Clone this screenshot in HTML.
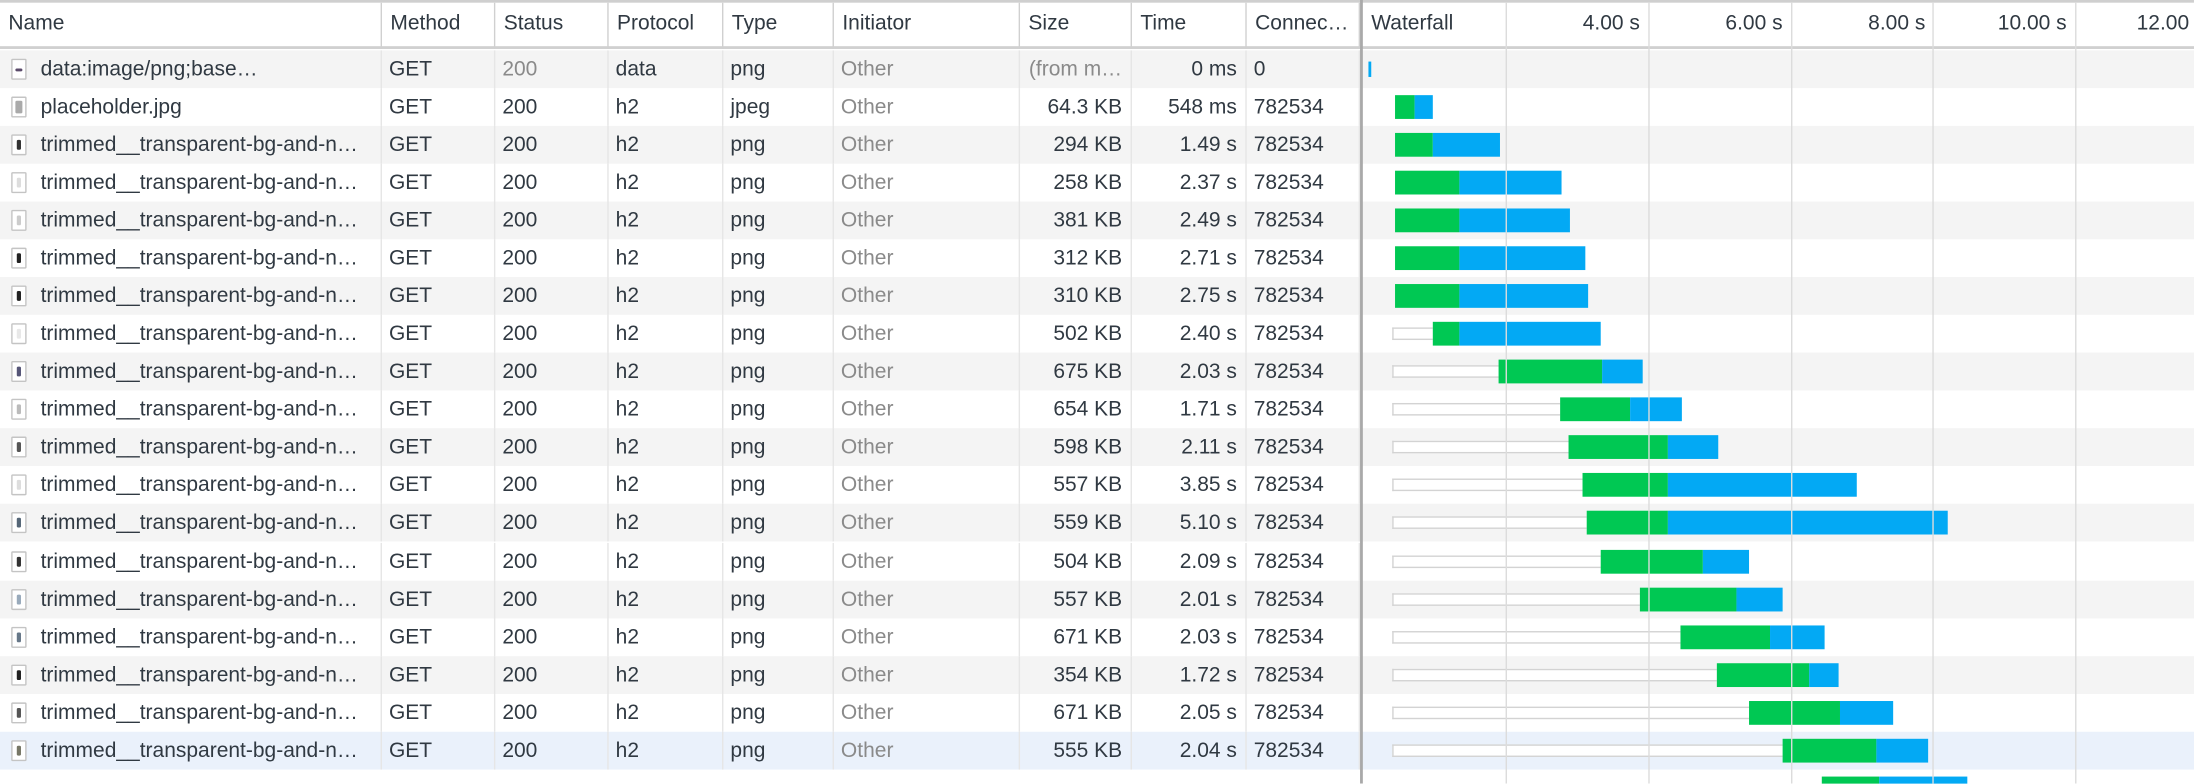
<!DOCTYPE html>
<html><head><meta charset="utf-8"><style>
*{margin:0;padding:0;box-sizing:border-box}
html,body{width:2194px;height:784px;overflow:hidden;background:#fff}
#s{position:absolute;left:0;top:0;width:1568px;height:560px;overflow:hidden;transform:scale(1.39923);transform-origin:0 0;font-family:"Liberation Sans",Arial,sans-serif;font-size:15px;color:#303942}
.top{position:absolute;left:0;top:0;width:1568px;height:2px;background:#cfcfcf}
.hdr{position:absolute;top:2px;left:0;width:1568px;height:33px;border-bottom:2px solid #d0d0d0;background:#fff}
.h{position:absolute;top:0;height:33px;line-height:30px;padding-left:6px;border-right:1px solid #d0d0d0;white-space:nowrap;overflow:hidden}
.row{position:absolute;left:0;width:1568px;height:27.07px}
.g{background:#f4f4f4}
.sel{background:#eaf1fb}
.c{position:absolute;top:0;height:27.07px;line-height:27px;padding-left:5px;white-space:nowrap;overflow:hidden;border-right:1px solid #e6e6e6}
.r{text-align:right;padding-right:6px;padding-left:0}
.gr{color:#8a8a8a}
.ic{position:absolute;left:8px;top:6px;width:11px;height:15px;border:1px solid #c4c4c4;background:#fff;border-radius:1px}
.ic i{position:absolute;left:3px;top:3px;width:3px;height:7px;border-radius:1px}
.nm{padding-left:29px}
.wf{position:absolute;left:972px;top:0;width:2px;height:560px;background:#a9a9a9;z-index:5}
.gl{position:absolute;top:2px;width:1px;height:558px;background:#dcdcdc;z-index:4}
.tl{position:absolute;top:2px;height:33px;line-height:30px;text-align:right;width:80px;z-index:6}
.b{position:absolute;height:17px;top:5px}
.gn{background:#00c853}.bl{background:#03a9f4}
.w{position:absolute;height:9px;top:9px;border:1.5px solid #d3d3d3;background:#fff;border-right:none}
</style></head><body><div id="s">
<div class="top"></div>
<div class="hdr">
<div class="h" style="left:0;width:273px">Name</div>
<div class="h" style="left:273px;width:81px">Method</div>
<div class="h" style="left:354px;width:81px">Status</div>
<div class="h" style="left:435px;width:82px">Protocol</div>
<div class="h" style="left:517px;width:79px">Type</div>
<div class="h" style="left:596px;width:133px">Initiator</div>
<div class="h" style="left:729px;width:80px">Size</div>
<div class="h" style="left:809px;width:82px">Time</div>
<div class="h" style="left:891px;width:81px">Connec…</div>
<div class="h" style="left:974px;width:102px;border:none">Waterfall</div>
</div>
<div class="tl" style="left:1092px">4.00 s</div>
<div class="tl" style="left:1194px">6.00 s</div>
<div class="tl" style="left:1296px">8.00 s</div>
<div class="tl" style="left:1397px">10.00 s</div>
<div class="tl" style="left:1527px;text-align:left">12.00</div>
<div class="gl" style="left:1076px"></div><div class="gl" style="left:1178px"></div><div class="gl" style="left:1280px"></div><div class="gl" style="left:1381px"></div><div class="gl" style="left:1483px"></div>
<div class="wf"></div>

<div class="row g" style="top:35.5px"><div class="c nm" style="left:0;width:273px"><span class="ic"><i style="background:#5a4a6a;top:6px;height:2px;width:5px;left:2px"></i></span>data:image/png;base…</div><div class="c" style="left:273px;width:81px">GET</div><div class="c gr" style="left:354px;width:81px">200</div><div class="c" style="left:435px;width:82px">data</div><div class="c" style="left:517px;width:79px">png</div><div class="c gr" style="left:596px;width:133px">Other</div><div class="c r gr" style="left:729px;width:80px">(from m…</div><div class="c r" style="left:809px;width:82px">0 ms</div><div class="c" style="left:891px;width:81px">0</div><div class="b bl" style="left:978px;width:2px;top:8px;height:11px"></div></div>

<div class="row" style="top:62.6px"><div class="c nm" style="left:0;width:273px"><span class="ic"><i style="background:#aaa;width:5px;height:9px;left:2px;top:2px"></i></span>placeholder.jpg</div><div class="c" style="left:273px;width:81px">GET</div><div class="c" style="left:354px;width:81px">200</div><div class="c" style="left:435px;width:82px">h2</div><div class="c" style="left:517px;width:79px">jpeg</div><div class="c gr" style="left:596px;width:133px">Other</div><div class="c r" style="left:729px;width:80px">64.3 KB</div><div class="c r" style="left:809px;width:82px">548 ms</div><div class="c" style="left:891px;width:81px">782534</div><div class="b gn" style="left:997px;width:14px"></div><div class="b bl" style="left:1011px;width:13px"></div></div>

<div class="row g" style="top:89.7px"><div class="c nm" style="left:0;width:273px"><span class="ic"><i style="background:#333"></i></span>trimmed__transparent-bg-and-n…</div><div class="c" style="left:273px;width:81px">GET</div><div class="c" style="left:354px;width:81px">200</div><div class="c" style="left:435px;width:82px">h2</div><div class="c" style="left:517px;width:79px">png</div><div class="c gr" style="left:596px;width:133px">Other</div><div class="c r" style="left:729px;width:80px">294 KB</div><div class="c r" style="left:809px;width:82px">1.49 s</div><div class="c" style="left:891px;width:81px">782534</div><div class="b gn" style="left:997px;width:27px"></div><div class="b bl" style="left:1024px;width:48px"></div></div>

<div class="row" style="top:116.7px"><div class="c nm" style="left:0;width:273px"><span class="ic"><i style="background:#ddd"></i></span>trimmed__transparent-bg-and-n…</div><div class="c" style="left:273px;width:81px">GET</div><div class="c" style="left:354px;width:81px">200</div><div class="c" style="left:435px;width:82px">h2</div><div class="c" style="left:517px;width:79px">png</div><div class="c gr" style="left:596px;width:133px">Other</div><div class="c r" style="left:729px;width:80px">258 KB</div><div class="c r" style="left:809px;width:82px">2.37 s</div><div class="c" style="left:891px;width:81px">782534</div><div class="b gn" style="left:997px;width:46px"></div><div class="b bl" style="left:1043px;width:73px"></div></div>

<div class="row g" style="top:143.8px"><div class="c nm" style="left:0;width:273px"><span class="ic"><i style="background:#ccc"></i></span>trimmed__transparent-bg-and-n…</div><div class="c" style="left:273px;width:81px">GET</div><div class="c" style="left:354px;width:81px">200</div><div class="c" style="left:435px;width:82px">h2</div><div class="c" style="left:517px;width:79px">png</div><div class="c gr" style="left:596px;width:133px">Other</div><div class="c r" style="left:729px;width:80px">381 KB</div><div class="c r" style="left:809px;width:82px">2.49 s</div><div class="c" style="left:891px;width:81px">782534</div><div class="b gn" style="left:997px;width:46px"></div><div class="b bl" style="left:1043px;width:79px"></div></div>

<div class="row" style="top:170.9px"><div class="c nm" style="left:0;width:273px"><span class="ic"><i style="background:#222"></i></span>trimmed__transparent-bg-and-n…</div><div class="c" style="left:273px;width:81px">GET</div><div class="c" style="left:354px;width:81px">200</div><div class="c" style="left:435px;width:82px">h2</div><div class="c" style="left:517px;width:79px">png</div><div class="c gr" style="left:596px;width:133px">Other</div><div class="c r" style="left:729px;width:80px">312 KB</div><div class="c r" style="left:809px;width:82px">2.71 s</div><div class="c" style="left:891px;width:81px">782534</div><div class="b gn" style="left:997px;width:46px"></div><div class="b bl" style="left:1043px;width:90px"></div></div>

<div class="row g" style="top:198px"><div class="c nm" style="left:0;width:273px"><span class="ic"><i style="background:#222"></i></span>trimmed__transparent-bg-and-n…</div><div class="c" style="left:273px;width:81px">GET</div><div class="c" style="left:354px;width:81px">200</div><div class="c" style="left:435px;width:82px">h2</div><div class="c" style="left:517px;width:79px">png</div><div class="c gr" style="left:596px;width:133px">Other</div><div class="c r" style="left:729px;width:80px">310 KB</div><div class="c r" style="left:809px;width:82px">2.75 s</div><div class="c" style="left:891px;width:81px">782534</div><div class="b gn" style="left:997px;width:46px"></div><div class="b bl" style="left:1043px;width:92px"></div></div>

<div class="row" style="top:225px"><div class="c nm" style="left:0;width:273px"><span class="ic"><i style="background:#e8e8e8"></i></span>trimmed__transparent-bg-and-n…</div><div class="c" style="left:273px;width:81px">GET</div><div class="c" style="left:354px;width:81px">200</div><div class="c" style="left:435px;width:82px">h2</div><div class="c" style="left:517px;width:79px">png</div><div class="c gr" style="left:596px;width:133px">Other</div><div class="c r" style="left:729px;width:80px">502 KB</div><div class="c r" style="left:809px;width:82px">2.40 s</div><div class="c" style="left:891px;width:81px">782534</div><div class="w" style="left:995px;width:29px"></div><div class="b gn" style="left:1024px;width:19px"></div><div class="b bl" style="left:1043px;width:101px"></div></div>

<div class="row g" style="top:252.1px"><div class="c nm" style="left:0;width:273px"><span class="ic"><i style="background:#557"></i></span>trimmed__transparent-bg-and-n…</div><div class="c" style="left:273px;width:81px">GET</div><div class="c" style="left:354px;width:81px">200</div><div class="c" style="left:435px;width:82px">h2</div><div class="c" style="left:517px;width:79px">png</div><div class="c gr" style="left:596px;width:133px">Other</div><div class="c r" style="left:729px;width:80px">675 KB</div><div class="c r" style="left:809px;width:82px">2.03 s</div><div class="c" style="left:891px;width:81px">782534</div><div class="w" style="left:995px;width:76px"></div><div class="b gn" style="left:1071px;width:74px"></div><div class="b bl" style="left:1145px;width:29px"></div></div>

<div class="row" style="top:279.2px"><div class="c nm" style="left:0;width:273px"><span class="ic"><i style="background:#bbb"></i></span>trimmed__transparent-bg-and-n…</div><div class="c" style="left:273px;width:81px">GET</div><div class="c" style="left:354px;width:81px">200</div><div class="c" style="left:435px;width:82px">h2</div><div class="c" style="left:517px;width:79px">png</div><div class="c gr" style="left:596px;width:133px">Other</div><div class="c r" style="left:729px;width:80px">654 KB</div><div class="c r" style="left:809px;width:82px">1.71 s</div><div class="c" style="left:891px;width:81px">782534</div><div class="w" style="left:995px;width:120px"></div><div class="b gn" style="left:1115px;width:50px"></div><div class="b bl" style="left:1165px;width:37px"></div></div>

<div class="row g" style="top:306.3px"><div class="c nm" style="left:0;width:273px"><span class="ic"><i style="background:#555"></i></span>trimmed__transparent-bg-and-n…</div><div class="c" style="left:273px;width:81px">GET</div><div class="c" style="left:354px;width:81px">200</div><div class="c" style="left:435px;width:82px">h2</div><div class="c" style="left:517px;width:79px">png</div><div class="c gr" style="left:596px;width:133px">Other</div><div class="c r" style="left:729px;width:80px">598 KB</div><div class="c r" style="left:809px;width:82px">2.11 s</div><div class="c" style="left:891px;width:81px">782534</div><div class="w" style="left:995px;width:126px"></div><div class="b gn" style="left:1121px;width:71px"></div><div class="b bl" style="left:1192px;width:36px"></div></div>

<div class="row" style="top:333.4px"><div class="c nm" style="left:0;width:273px"><span class="ic"><i style="background:#ddd"></i></span>trimmed__transparent-bg-and-n…</div><div class="c" style="left:273px;width:81px">GET</div><div class="c" style="left:354px;width:81px">200</div><div class="c" style="left:435px;width:82px">h2</div><div class="c" style="left:517px;width:79px">png</div><div class="c gr" style="left:596px;width:133px">Other</div><div class="c r" style="left:729px;width:80px">557 KB</div><div class="c r" style="left:809px;width:82px">3.85 s</div><div class="c" style="left:891px;width:81px">782534</div><div class="w" style="left:995px;width:136px"></div><div class="b gn" style="left:1131px;width:61px"></div><div class="b bl" style="left:1192px;width:135px"></div></div>

<div class="row g" style="top:360.4px"><div class="c nm" style="left:0;width:273px"><span class="ic"><i style="background:#567"></i></span>trimmed__transparent-bg-and-n…</div><div class="c" style="left:273px;width:81px">GET</div><div class="c" style="left:354px;width:81px">200</div><div class="c" style="left:435px;width:82px">h2</div><div class="c" style="left:517px;width:79px">png</div><div class="c gr" style="left:596px;width:133px">Other</div><div class="c r" style="left:729px;width:80px">559 KB</div><div class="c r" style="left:809px;width:82px">5.10 s</div><div class="c" style="left:891px;width:81px">782534</div><div class="w" style="left:995px;width:139px"></div><div class="b gn" style="left:1134px;width:58px"></div><div class="b bl" style="left:1192px;width:200px"></div></div>

<div class="row" style="top:387.5px"><div class="c nm" style="left:0;width:273px"><span class="ic"><i style="background:#333"></i></span>trimmed__transparent-bg-and-n…</div><div class="c" style="left:273px;width:81px">GET</div><div class="c" style="left:354px;width:81px">200</div><div class="c" style="left:435px;width:82px">h2</div><div class="c" style="left:517px;width:79px">png</div><div class="c gr" style="left:596px;width:133px">Other</div><div class="c r" style="left:729px;width:80px">504 KB</div><div class="c r" style="left:809px;width:82px">2.09 s</div><div class="c" style="left:891px;width:81px">782534</div><div class="w" style="left:995px;width:149px"></div><div class="b gn" style="left:1144px;width:73px"></div><div class="b bl" style="left:1217px;width:33px"></div></div>

<div class="row g" style="top:414.6px"><div class="c nm" style="left:0;width:273px"><span class="ic"><i style="background:#9ab"></i></span>trimmed__transparent-bg-and-n…</div><div class="c" style="left:273px;width:81px">GET</div><div class="c" style="left:354px;width:81px">200</div><div class="c" style="left:435px;width:82px">h2</div><div class="c" style="left:517px;width:79px">png</div><div class="c gr" style="left:596px;width:133px">Other</div><div class="c r" style="left:729px;width:80px">557 KB</div><div class="c r" style="left:809px;width:82px">2.01 s</div><div class="c" style="left:891px;width:81px">782534</div><div class="w" style="left:995px;width:177px"></div><div class="b gn" style="left:1172px;width:69px"></div><div class="b bl" style="left:1241px;width:33px"></div></div>

<div class="row" style="top:441.7px"><div class="c nm" style="left:0;width:273px"><span class="ic"><i style="background:#678"></i></span>trimmed__transparent-bg-and-n…</div><div class="c" style="left:273px;width:81px">GET</div><div class="c" style="left:354px;width:81px">200</div><div class="c" style="left:435px;width:82px">h2</div><div class="c" style="left:517px;width:79px">png</div><div class="c gr" style="left:596px;width:133px">Other</div><div class="c r" style="left:729px;width:80px">671 KB</div><div class="c r" style="left:809px;width:82px">2.03 s</div><div class="c" style="left:891px;width:81px">782534</div><div class="w" style="left:995px;width:206px"></div><div class="b gn" style="left:1201px;width:64px"></div><div class="b bl" style="left:1265px;width:39px"></div></div>

<div class="row g" style="top:468.8px"><div class="c nm" style="left:0;width:273px"><span class="ic"><i style="background:#222"></i></span>trimmed__transparent-bg-and-n…</div><div class="c" style="left:273px;width:81px">GET</div><div class="c" style="left:354px;width:81px">200</div><div class="c" style="left:435px;width:82px">h2</div><div class="c" style="left:517px;width:79px">png</div><div class="c gr" style="left:596px;width:133px">Other</div><div class="c r" style="left:729px;width:80px">354 KB</div><div class="c r" style="left:809px;width:82px">1.72 s</div><div class="c" style="left:891px;width:81px">782534</div><div class="w" style="left:995px;width:232px"></div><div class="b gn" style="left:1227px;width:66px"></div><div class="b bl" style="left:1293px;width:21px"></div></div>

<div class="row" style="top:495.8px"><div class="c nm" style="left:0;width:273px"><span class="ic"><i style="background:#555"></i></span>trimmed__transparent-bg-and-n…</div><div class="c" style="left:273px;width:81px">GET</div><div class="c" style="left:354px;width:81px">200</div><div class="c" style="left:435px;width:82px">h2</div><div class="c" style="left:517px;width:79px">png</div><div class="c gr" style="left:596px;width:133px">Other</div><div class="c r" style="left:729px;width:80px">671 KB</div><div class="c r" style="left:809px;width:82px">2.05 s</div><div class="c" style="left:891px;width:81px">782534</div><div class="w" style="left:995px;width:255px"></div><div class="b gn" style="left:1250px;width:65px"></div><div class="b bl" style="left:1315px;width:38px"></div></div>

<div class="row sel" style="top:522.9px"><div class="c nm" style="left:0;width:273px"><span class="ic"><i style="background:#776"></i></span>trimmed__transparent-bg-and-n…</div><div class="c" style="left:273px;width:81px">GET</div><div class="c" style="left:354px;width:81px">200</div><div class="c" style="left:435px;width:82px">h2</div><div class="c" style="left:517px;width:79px">png</div><div class="c gr" style="left:596px;width:133px">Other</div><div class="c r" style="left:729px;width:80px">555 KB</div><div class="c r" style="left:809px;width:82px">2.04 s</div><div class="c" style="left:891px;width:81px">782534</div><div class="w" style="left:995px;width:279px"></div><div class="b gn" style="left:1274px;width:67px"></div><div class="b bl" style="left:1341px;width:37px"></div></div>

<div class="row" style="top:550px"><div class="b gn" style="left:1302px;width:41px"></div><div class="b bl" style="left:1343px;width:63px"></div></div>
</div></body></html>
